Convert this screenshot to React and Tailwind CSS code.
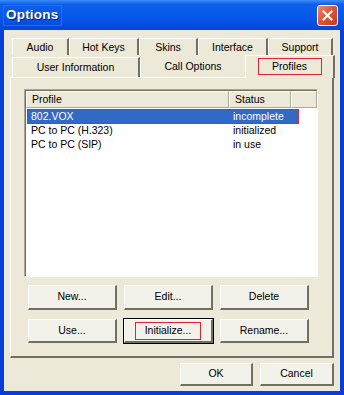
import React from "react";

const font = "font-['Liberation_Sans','Arial',sans-serif]";

function Btn({ children, w = "w-[89px]", h = "h-[25px]", focused = false }) {
  return (
    <div
      className={`${w} ${h} flex items-center justify-center bg-[#F2F1EA] border-t border-l border-t-white border-l-white border-r-2 border-b-2 border-r-[#716F64] border-b-[#716F64] ${
        focused ? "outline outline-1 outline-black" : ""
      }`}
    >
      {focused ? (
        <span className="border border-[#E0242C] px-[9px] h-[18px] flex items-center">{children}</span>
      ) : (
        <span>{children}</span>
      )}
    </div>
  );
}

function BackTab({ w, label }) {
  return (
    <div
      className={`${w} h-[17px] flex items-center justify-center border-t border-l border-t-white border-l-white border-r-2 border-r-[#716F64] pt-[1px]`}
    >
      {label}
    </div>
  );
}

export default function App() {
  return (
    <div className={`w-[344px] h-[395px] bg-[#0A3ED8] flex flex-col text-[10.5px] text-black ${font}`}>
      {/* title bar */}
      <div className="h-[30px] flex items-center justify-between pl-[3px] pr-[6px] bg-[linear-gradient(to_bottom,#3D8BF8_0%,#0C5FEB_15%,#0656E8_60%,#0546D6_100%)]">
        <span className="border border-[#E8283C] h-[21px] pl-[2px] pr-[3px] flex items-center text-white font-bold text-[13.5px] tracking-[0.2px] [text-shadow:1px_1px_0_#0A1F6E]">
          Options
        </span>
        <div className="w-[21px] h-[21px] rounded-[3px] border border-white bg-[linear-gradient(135deg,#EE8A6C_0%,#E0553A_45%,#C8381C_100%)] flex items-center justify-center">
          <svg width="11" height="11" viewBox="0 0 11 11">
            <path d="M1.5 1.5 L9.5 9.5 M9.5 1.5 L1.5 9.5" stroke="white" strokeWidth="2.2" strokeLinecap="square" />
          </svg>
        </div>
      </div>

      {/* body */}
      <div className="flex-1 mx-[4px] mb-[4px] bg-[#ECE9D8] flex flex-col pt-[8px]">
        {/* tabs */}
        <div className="ml-[8px] flex flex-col">
          <div className="flex">
            <BackTab w="w-[57px]" label="Audio" />
            <BackTab w="w-[70px]" label="Hot Keys" />
            <BackTab w="w-[59px]" label="Skins" />
            <BackTab w="w-[70px]" label="Interface" />
            <BackTab w="w-[65px]" label="Support" />
          </div>
          <div className="flex items-end">
            <div className="w-[128px] h-[20px] flex items-center justify-center border-t border-l border-t-white border-l-white border-r-2 border-r-[#716F64]">
              User Information
            </div>
            <div className="w-[107px] h-[20px] flex items-center justify-center border-l border-l-white border-r-2 border-r-[#716F64]">
              Call Options
            </div>
            <div className="w-[90px] h-[23px] -ml-[2px] -mb-[1px] relative z-10 bg-[#ECE9D8] flex justify-center pt-[2px] border-t border-l border-t-white border-l-white border-r-2 border-r-[#716F64]">
              <span className="border border-[#E0242C] w-[64px] h-[17px] flex items-center justify-center">Profiles</span>
            </div>
          </div>
        </div>

        {/* panel */}
        <div className="ml-[6px] w-[324px] h-[281px] border-t border-l border-t-white border-l-white border-r-2 border-b-2 border-r-[#716F64] border-b-[#716F64] pl-[13px] pt-[11px] flex flex-col">
          {/* list */}
          <div className="w-[294px] h-[188px] bg-white border border-t-[#ACA899] border-l-[#ACA899] border-r-white border-b-white shadow-[inset_1px_1px_0_#716F64] pt-[1px] pl-[1px] flex flex-col">
            <div className="flex h-[17px] bg-[#ECE9D8]">
              <div className="w-[203px] flex items-center pl-[5px] border-t border-l border-t-white border-l-white border-r border-b border-r-[#ACA899] border-b-[#ACA899]">
                Profile
              </div>
              <div className="w-[62px] flex items-center pl-[5px] border-t border-l border-t-white border-l-white border-r border-b border-r-[#ACA899] border-b-[#ACA899]">
                Status
              </div>
              <div className="flex-1 border-t border-l border-t-white border-l-white border-r border-b border-r-[#ACA899] border-b-[#ACA899]" />
            </div>
            <div className="mt-[1px] ml-[1px] w-[272px] h-[15px] border border-[#E0242C] bg-[#316AC5] text-white flex items-center">
              <span className="w-[205px] pl-[3px]">802.VOX</span>
              <span>incomplete</span>
            </div>
            <div className="ml-[1px] h-[14px] flex items-center">
              <span className="w-[206px] pl-[4px]">PC to PC (H.323)</span>
              <span>initialized</span>
            </div>
            <div className="ml-[1px] h-[14px] flex items-center">
              <span className="w-[206px] pl-[4px]">PC to PC (SIP)</span>
              <span>in use</span>
            </div>
          </div>

          {/* buttons */}
          <div className="ml-[4px] mt-[8px] flex gap-[7px]">
            <Btn>New...</Btn>
            <Btn>Edit...</Btn>
            <Btn>Delete</Btn>
          </div>
          <div className="ml-[4px] mt-[9px] flex gap-[7px]">
            <Btn h="h-[24px]">Use...</Btn>
            <Btn h="h-[24px]" focused>
              Initialize...
            </Btn>
            <Btn h="h-[24px]">Rename...</Btn>
          </div>
        </div>

        {/* bottom buttons */}
        <div className="mt-[5px] mr-[6px] flex justify-end gap-[7px]">
          <Btn w="w-[73px]" h="h-[23px]">OK</Btn>
          <Btn w="w-[74px]" h="h-[23px]">Cancel</Btn>
        </div>
      </div>
    </div>
  );
}
